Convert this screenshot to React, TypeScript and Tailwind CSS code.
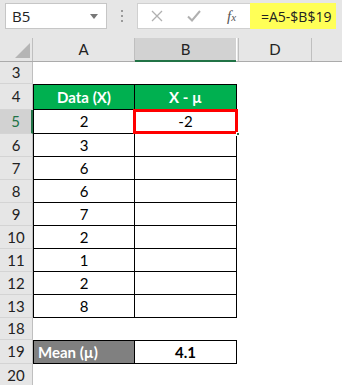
import React from "react";

type Row = {
  n: string;
  h: string;
  kind: "empty" | "head" | "data" | "mean";
  a?: string;
  b?: string;
  sel?: boolean;
};

const rows: Row[] = [
  { n: "3", h: "h-[22px]", kind: "empty" },
  { n: "4", h: "h-[26px]", kind: "head" },
  { n: "5", h: "h-[24px]", kind: "data", a: "2", b: "-2", sel: true },
  { n: "6", h: "h-[23px]", kind: "data", a: "3" },
  { n: "7", h: "h-[23px]", kind: "data", a: "6" },
  { n: "8", h: "h-[23px]", kind: "data", a: "6" },
  { n: "9", h: "h-[23px]", kind: "data", a: "7" },
  { n: "10", h: "h-[23px]", kind: "data", a: "2" },
  { n: "11", h: "h-[23px]", kind: "data", a: "1" },
  { n: "12", h: "h-[23px]", kind: "data", a: "2" },
  { n: "13", h: "h-[23px]", kind: "data", a: "8" },
  { n: "18", h: "h-[22px]", kind: "empty" },
  { n: "19", h: "h-[24px]", kind: "mean" },
  { n: "20", h: "h-[23px]", kind: "empty" },
];

const cellFont = "font-['Lato','Liberation_Sans',sans-serif] text-[15px] text-black";

function RowHeader({ n, sel }: { n: string; sel?: boolean }) {
  return (
    <div
      className={
        "w-[33px] shrink-0 h-full flex items-center justify-center border-b border-b-[#d4d4d4] text-[15px] font-['Lato',sans-serif] " +
        (sel
          ? "bg-[#d2d2d2] border-r-2 border-r-[#217346] text-[#217346]"
          : "bg-[#e6e6e6] border-r border-r-[#bfbfbf] text-[#222]")
      }
    >
      {n}
    </div>
  );
}

function SheetRow({ r }: { r: Row }) {
  let a: React.ReactNode = null;
  let b: React.ReactNode = null;
  if (r.kind === "head") {
    a = (
      <div className="w-[102px] h-full flex items-center justify-center bg-[#00b050] border border-black font-bold text-white">
        Data (X)
      </div>
    );
    b = (
      <div className="w-[102px] h-full flex items-center justify-center bg-[#00b050] border-y border-r border-black font-bold text-white">
        X - µ
      </div>
    );
  } else if (r.kind === "data") {
    a = (
      <div className="w-[102px] h-full flex items-center justify-center border-l border-r border-b border-black">{r.a}</div>
    );
    b = (
      <div className="w-[102px] h-full flex items-center justify-center border-r border-b border-black">{r.b}</div>
    );
  } else if (r.kind === "mean") {
    a = (
      <div className="w-[102px] h-full flex items-center pl-[4px] bg-[#808080] border border-black font-bold text-white">
        Mean (µ)
      </div>
    );
    b = (
      <div className="w-[102px] h-full flex items-center justify-center border-y border-r border-black font-bold">4.1</div>
    );
  }
  return (
    <div className={"flex " + r.h + " " + cellFont}>
      <RowHeader n={r.n} sel={r.sel} />
      {a}
      {b}
    </div>
  );
}

export default function App() {
  return (
    <div className="relative w-[342px] h-[385px] overflow-hidden bg-white">
      {/* formula bar */}
      <div className="h-[38px] bg-[#e6e6e6] flex items-start pt-[3px] font-['Open_Sans','Liberation_Sans',sans-serif]">
        <div className="ml-[5px] w-[102px] h-[26px] bg-white border border-[#c6c6c6] flex items-center justify-between pl-[6px] pr-[8px] text-[15px] text-[#222]">
          <span>B5</span>
          <svg width="8" height="5" viewBox="0 0 8 5">
            <path d="M0 0h8L4 5z" fill="#777" />
          </svg>
        </div>
        <div className="w-[30px] h-[26px] flex flex-col items-center justify-center gap-[3px]">
          <span className="w-[2px] h-[2px] bg-[#9a9a9a]" />
          <span className="w-[2px] h-[2px] bg-[#9a9a9a]" />
          <span className="w-[2px] h-[2px] bg-[#9a9a9a]" />
        </div>
        <div className="w-[113px] h-[26px] bg-white border border-[#d0d0d0] border-r-0 flex items-center">
          <svg className="ml-[13px]" width="12" height="12" viewBox="0 0 12 12">
            <path d="M1 1l10 10M11 1L1 11" stroke="#b0b0b0" strokeWidth="1.3" fill="none" />
          </svg>
          <svg className="ml-[24px]" width="14" height="12" viewBox="0 0 14 12">
            <path d="M1 6.5l4 4L13 1" stroke="#b0b0b0" strokeWidth="2" fill="none" />
          </svg>
          <span className="ml-[26px] font-['Liberation_Serif',serif] italic text-[15px] text-[#555]">
            f<span className="text-[11px]">x</span>
          </span>
        </div>
        <div className="w-[86px] h-[26px] bg-[#ffff57] flex items-center pl-[11px] text-[14px] text-[#222]">
          =A5-$B$19
        </div>
      </div>

      {/* column headers */}
      <div className="flex h-[24px] bg-[#e6e6e6] border-b border-[#ababab] font-['Lato',sans-serif] text-[15px] text-[#222]">
        <div className="w-[33px] shrink-0 border-r border-[#bfbfbf] flex items-end justify-end pr-[2px] pb-[3px]">
          <svg width="15" height="15" viewBox="0 0 15 15">
            <path d="M15 0V15H0z" fill="#b5b5b5" />
          </svg>
        </div>
        <div className="w-[102px] border-r border-[#bfbfbf] flex items-center justify-center">A</div>
        <div className="w-[101px] bg-[#d2d2d2] border-b-2 border-[#217346] flex items-center justify-center mb-[-1px]">
          B
        </div>
        <div className="w-[3px] border-l border-white border-r border-r-[#bfbfbf]" />
        <div className="w-[73px] border-r border-[#bfbfbf] flex items-center justify-center">D</div>
        <div className="flex-1" />
      </div>

      {rows.map((r) => (
        <SheetRow key={r.n} r={r} />
      ))}

      {/* selection outline */}
      <div className="absolute left-[133px] top-[109px] w-[105px] h-[25px] border-[3px] border-[#ff0000]" />
      <div className="absolute left-[236px] top-[132px] w-[4px] h-[4px] bg-[#217346] border border-white" />
    </div>
  );
}
